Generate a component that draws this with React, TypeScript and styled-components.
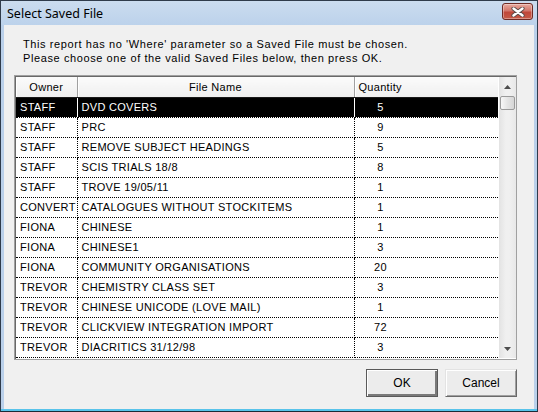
import React from 'react'
import styled, { createGlobalStyle } from 'styled-components'

const Global = createGlobalStyle`
  html, body {
    margin: 0;
    padding: 0;
    background: #ffffff;
  }
  * {
    box-sizing: border-box;
  }
`

const uiFont = `"Liberation Sans", Arial, sans-serif`

const Window = styled.div`
  width: 538px;
  height: 412px;
  display: flex;
  flex-direction: column;
  border: 1px solid #2f3b4b;
  border-bottom-color: #1c2a36;
  background: #bad0ea;
  padding: 0 3px 2px 3px;
  box-shadow: inset 0 -2px 0 #58c3ea;
  font-family: ${uiFont};
`

const TitleBar = styled.div`
  height: 24px;
  margin: 0 -3px;
  padding: 0 4px 0 6px;
  display: flex;
  align-items: center;
  justify-content: space-between;
  background: linear-gradient(#cbdcef, #bcd2eb);
`

const Title = styled.span`
  font-family: "Noto Sans", "Open Sans", sans-serif;
  font-size: 12.5px;
  color: #000;
  padding-top: 1px;
`

const CloseButton = styled.div`
  width: 31px;
  height: 17px;
  margin-top: -3px;
  border: 1px solid #6e2a24;
  border-radius: 3px;
  background: linear-gradient(#e9aa9f 0%, #d3766a 45%, #c0483a 55%, #c65a47 100%);
  box-shadow: inset 0 0 0 1px rgba(255, 255, 255, 0.35);
  display: flex;
  align-items: center;
  justify-content: center;
`

const Client = styled.div`
  flex: 1;
  background: #f0f0f0;
  display: flex;
  flex-direction: column;
  padding: 12px 17px 0 10px;
`

const Intro = styled.p`
  margin: 0 0 0 9px;
  font-size: 11px;
  line-height: 14px;
  letter-spacing: 0.6px;
  color: #000;
`

const ListBox = styled.div`
  margin-top: 10px;
  height: 285px;
  display: flex;
  border: 1px solid #a0a0a0;
  box-shadow: inset 1px 1px 0 #696969;
  padding: 1px 0 1px 1px;
  background: #ffffff;
`

const Grid = styled.table`
  width: 482px;
  table-layout: fixed;
  border-collapse: collapse;
  font-size: 11px;
  letter-spacing: 0.3px;
  align-self: flex-start;
`

const Th = styled.th<{ $align?: string; $last?: boolean }>`
  height: 20px;
  padding: 0 4px;
  font-weight: normal;
  text-align: ${(p) => p.$align || 'center'};
  background: linear-gradient(#fbfbfb, #efefef);
  border-bottom: 1px solid #1a1a1a;
  border-right: ${(p) => (p.$last ? 'none' : '1px solid #a0a0a0')};
  box-shadow: inset 1px 0 0 #ffffff;
  color: #000;
  white-space: nowrap;
  overflow: hidden;
`

const Tr = styled.tr<{ $selected?: boolean }>`
  height: 20px;
  background: ${(p) => (p.$selected ? '#000000' : '#ffffff')};
  color: ${(p) => (p.$selected ? '#ffffff' : '#000000')};
`

const Td = styled.td<{ $last?: boolean; $selected?: boolean }>`
  padding: 0 4px;
  height: 20px;
  white-space: nowrap;
  overflow: hidden;
  text-overflow: clip;
  border-bottom: 1px dotted #000;
  border-right: ${(p) =>
    p.$last ? 'none' : `1px dotted ${p.$selected ? '#ffffff' : '#000000'}`};
`

const Qty = styled.span`
  display: inline-block;
  width: 44px;
  text-align: center;
`

const ScrollBar = styled.div`
  width: 17px;
  margin-left: 1px;
  display: flex;
  flex-direction: column;
  background: linear-gradient(90deg, #e3e3e3, #f0f0f0 40%, #f0f0f0 60%, #e8e8e8);
`

const Arrow = styled.div`
  height: 19px;
  display: flex;
  align-items: center;
  justify-content: center;
`

const Thumb = styled.div`
  height: 14px;
  margin: 0 1px;
  border: 1px solid #9a9a9a;
  border-radius: 2px;
  background: linear-gradient(90deg, #f7f7f7, #e4e4e4 50%, #d6d6d6);
`

const Track = styled.div`
  flex: 1;
`

const ButtonRow = styled.div`
  margin-top: 9px;
  display: flex;
  justify-content: flex-end;
  gap: 7px;
`

const Button = styled.button<{ $default?: boolean }>`
  width: 72px;
  height: 28px;
  padding: 0;
  font-family: ${uiFont};
  font-size: 12px;
  color: #000;
  background: #ececec;
  border: 1px solid;
  border-color: ${(p) =>
    p.$default ? '#5a5a5a' : '#e3e3e3 #696969 #696969 #e3e3e3'};
  box-shadow: ${(p) =>
    p.$default
      ? 'inset 1px 1px 0 #ffffff, inset -2px -2px 0 #7a7a7a'
      : 'inset 1px 1px 0 #ffffff, inset -1px -1px 0 #a0a0a0'};
`

const files = [
  { owner: 'STAFF', name: 'DVD COVERS', qty: 5 },
  { owner: 'STAFF', name: 'PRC', qty: 9 },
  { owner: 'STAFF', name: 'REMOVE SUBJECT HEADINGS', qty: 5 },
  { owner: 'STAFF', name: 'SCIS TRIALS 18/8', qty: 8 },
  { owner: 'STAFF', name: 'TROVE 19/05/11', qty: 1 },
  { owner: 'CONVERT', name: 'CATALOGUES WITHOUT STOCKITEMS', qty: 1 },
  { owner: 'FIONA', name: 'CHINESE', qty: 1 },
  { owner: 'FIONA', name: 'CHINESE1', qty: 3 },
  { owner: 'FIONA', name: 'COMMUNITY ORGANISATIONS', qty: 20 },
  { owner: 'TREVOR', name: 'CHEMISTRY CLASS SET', qty: 3 },
  { owner: 'TREVOR', name: 'CHINESE UNICODE (LOVE MAIL)', qty: 1 },
  { owner: 'TREVOR', name: 'CLICKVIEW INTEGRATION IMPORT', qty: 72 },
  { owner: 'TREVOR', name: 'DIACRITICS 31/12/98', qty: 3 },
]

const CloseGlyph = () => (
  <svg width="14" height="10" viewBox="0 0 14 10">
    <path d="M2.5 1.5 L11.5 8.5 M11.5 1.5 L2.5 8.5" stroke="#5a4a48" strokeWidth="4.2" strokeLinecap="round" />
    <path d="M2.5 1.5 L11.5 8.5 M11.5 1.5 L2.5 8.5" stroke="#ffffff" strokeWidth="2.4" strokeLinecap="round" />
  </svg>
)

const ArrowGlyph = ({ down }: { down?: boolean }) => (
  <svg width="7" height="4" viewBox="0 0 7 4">
    <path d={down ? 'M0 0 H7 L3.5 4 Z' : 'M0 4 H7 L3.5 0 Z'} fill="#4d4d4d" />
  </svg>
)

export default function App() {
  return (
    <>
      <Global />
      <Window>
        <TitleBar>
          <Title>Select Saved File</Title>
          <CloseButton>
            <CloseGlyph />
          </CloseButton>
        </TitleBar>
        <Client>
          <Intro>
            This report has no 'Where' parameter so a Saved File must be chosen.
            <br />
            Please choose one of the valid Saved Files below, then press OK.
          </Intro>
          <ListBox>
            <Grid>
              <colgroup>
                <col style={{ width: 61 }} />
                <col style={{ width: 277 }} />
                <col style={{ width: 144 }} />
              </colgroup>
              <thead>
                <tr>
                  <Th>Owner</Th>
                  <Th>File Name</Th>
                  <Th $align="left" $last>
                    Quantity
                  </Th>
                </tr>
              </thead>
              <tbody>
                {files.map((f, i) => (
                  <Tr key={i} $selected={i === 0}>
                    <Td $selected={i === 0}>{f.owner}</Td>
                    <Td $selected={i === 0}>{f.name}</Td>
                    <Td $last>
                      <Qty>{f.qty}</Qty>
                    </Td>
                  </Tr>
                ))}
              </tbody>
            </Grid>
            <ScrollBar>
              <Arrow>
                <ArrowGlyph />
              </Arrow>
              <Thumb />
              <Track />
              <Arrow>
                <ArrowGlyph down />
              </Arrow>
            </ScrollBar>
          </ListBox>
          <ButtonRow>
            <Button $default>OK</Button>
            <Button>Cancel</Button>
          </ButtonRow>
        </Client>
      </Window>
    </>
  )
}
